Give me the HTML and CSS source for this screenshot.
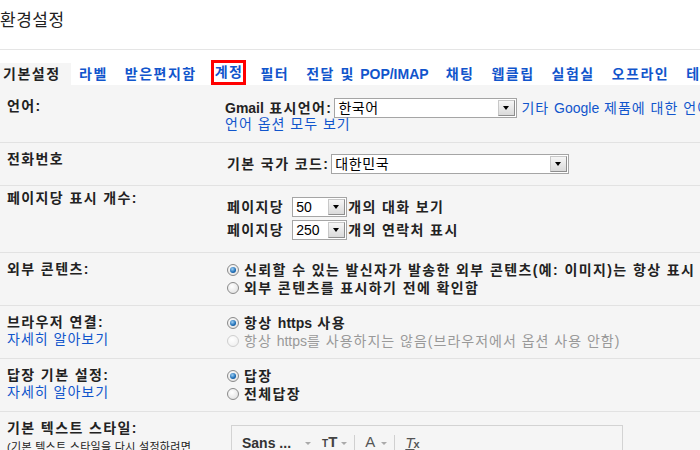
FILE: index.html
```html
<!DOCTYPE html>
<html lang="ko">
<head>
    <meta charset="UTF-8">
    <title>환경설정</title>
    <link rel="stylesheet" href="styles.css">
</head>
<body>
    <div class="header">
        <h1 class="title">환경설정</h1>
    </div>

    <div class="tabs">
        <a class="tab active">기본설정</a>
        <a class="tab">라벨</a>
        <a class="tab">받은편지함</a>
        <a class="tab"><span class="mark">계정</span></a>
        <a class="tab">필터</a>
        <a class="tab">전달 및 <span class="en">POP/IMAP</span></a>
        <a class="tab">채팅</a>
        <a class="tab">웹클립</a>
        <a class="tab">실험실</a>
        <a class="tab">오프라인</a>
        <a class="tab">테마</a>
    </div>

    <div class="settings">
        <div class="row row-lang">
            <div class="label">언어:</div>
            <div class="value">
                <div class="sel-line">
                    <span><span class="en">Gmail</span> 표시언어:</span>
                    <div class="select sel-lang"><span class="sel-text">한국어</span><i class="sel-btn"></i></div>
                    <a class="link link-side">기타 <span class="en">Google</span> 제품에 대한 언어 설정 변경</a>
                </div>
                <div class="sub-line"><a class="link">언어 옵션 모두 보기</a></div>
            </div>
        </div>

        <div class="row row-phone">
            <div class="label">전화번호</div>
            <div class="value">
                <div class="sel-line">
                    <span>기본 국가 코드:</span>
                    <div class="select sel-country"><span class="sel-text">대한민국</span><i class="sel-btn"></i></div>
                </div>
            </div>
        </div>

        <div class="row row-page">
            <div class="label">페이지당 표시 개수:</div>
            <div class="value">
                <div class="sel-line">
                    <span>페이지당</span>
                    <div class="select sel-num"><span class="sel-text en">50</span><i class="sel-btn"></i></div>
                    <span>개의 대화 보기</span>
                </div>
                <div class="sel-line">
                    <span>페이지당</span>
                    <div class="select sel-num"><span class="sel-text en">250</span><i class="sel-btn"></i></div>
                    <span>개의 연락처 표시</span>
                </div>
            </div>
        </div>

        <div class="row row-radio">
            <div class="label">외부 콘텐츠:</div>
            <div class="value">
                <div class="radio-line"><i class="radio on"></i><span>신뢰할 수 있는 발신자가 발송한 외부 콘텐츠(예: 이미지)는 항상 표시</span></div>
                <div class="radio-line"><i class="radio"></i><span>외부 콘텐츠를 표시하기 전에 확인함</span></div>
            </div>
        </div>

        <div class="row row-radio">
            <div class="label">
                브라우저 연결:
                <div><a class="link">자세히 알아보기</a></div>
            </div>
            <div class="value">
                <div class="radio-line"><i class="radio on"></i><span>항상 <span class="en">https</span> 사용</span></div>
                <div class="radio-line disabled"><i class="radio"></i><span>항상 <span class="en">https</span>를 사용하지는 않음(브라우저에서 옵션 사용 안함)</span></div>
            </div>
        </div>

        <div class="row row-radio">
            <div class="label">
                답장 기본 설정:
                <div><a class="link">자세히 알아보기</a></div>
            </div>
            <div class="value">
                <div class="radio-line"><i class="radio on"></i><span>답장</span></div>
                <div class="radio-line"><i class="radio"></i><span>전체답장</span></div>
            </div>
        </div>

        <div class="row row-style">
            <div class="label">
                기본 텍스트 스타일:
                <div class="hint">(기본 텍스트 스타일을 다시 설정하려면</div>
            </div>
            <div class="value">
                <div class="editor">
                    <div class="toolbar">
                        <span class="font-name">Sans ...</span>
                        <i class="caret caret-font"></i>
                        <span class="size-icon"><span class="t-sm">T</span><span class="t-lg">T</span></span>
                        <i class="caret"></i>
                        <i class="divider"></i>
                        <span class="color-icon">A</span>
                        <i class="caret"></i>
                        <i class="divider"></i>
                        <span class="clear-icon"><span class="clear-t">T</span><span class="clear-x">x</span></span>
                    </div>
                </div>
            </div>
        </div>
    </div>
</body>
</html>
```

FILE: styles.css
```css
html, body {
    margin: 0;
    overflow: hidden;
}
body {
    width: 700px;
    height: 450px;
    font-family: "Liberation Sans", Arial, "Noto Sans CJK KR", sans-serif;
    font-size: 14px;
    color: #222;
    background-color: #fff;
}
.en {
    letter-spacing: 0;
}

/* header + tabs */
.header {
    height: 49px;
    border-bottom: 1px solid #e5e5e5;
}
.title {
    margin: 0;
    padding-top: 8px;
    font-size: 17px;
    font-weight: normal;
    line-height: 26px;
    letter-spacing: 0.5px;
    color: #222;
}
.tabs {
    display: flex;
    padding-top: 13px;
    white-space: nowrap;
}
.tab {
    flex-shrink: 0;
    padding: 0 8.5px;
    line-height: 22px;
    height: 22px;
    font-weight: bold;
    letter-spacing: 1.5px;
    color: #15c;
}
.tab.active {
    padding: 0 10px 0 3px;
    background-color: #f5f5f5;
    color: #222;
}
.mark {
    display: inline-block;
    vertical-align: top;
    line-height: 19px;
    padding: 0 0 0 1px;
    outline: 3px solid #f00;
}

/* settings rows */
.settings {
    background-color: #f5f5f5;
    height: 400px;
}
.row {
    display: flex;
    padding: 8px 0 11px;
    border-bottom: 1px solid #e2e2e2;
    white-space: nowrap;
}
.label {
    flex-shrink: 0;
    width: 227px;
    box-sizing: border-box;
    padding-left: 7px;
    line-height: 17px;
    font-weight: bold;
    letter-spacing: 1.4px;
    color: #222;
}
.value {
    flex: 1;
    line-height: 18px;
    font-weight: bold;
    letter-spacing: 1.4px;
    color: #222;
}
.link {
    color: #15c;
    font-weight: normal;
    letter-spacing: 1px;
    text-decoration: none;
}

.row-lang .label { padding-top: 5px; }
.row-lang .value { padding-top: 5px; margin-left: -2px; }
.row-phone .value { padding-top: 3px; }
.row-page { padding-bottom: 12px; }
.row-page .label { margin-top: -4px; }
.row-page .value { padding-top: 3px; }
.row-radio { padding-bottom: 8px; }
.row-style .value { padding-top: 5px; }

.sel-line {
    display: flex;
    align-items: center;
    height: 20px;
}
.sel-line + .sel-line {
    margin-top: 3px;
}
.sub-line {
    line-height: 13px;
}
.link-side {
    margin-left: 4px;
}

/* select boxes */
.select {
    display: flex;
    align-items: center;
    height: 20px;
    box-sizing: border-box;
    margin-left: 2px;
    padding-left: 3px;
    border: 1px solid #a5a5a5;
    background-color: #fff;
    font-weight: normal;
    color: #000;
    letter-spacing: 0.6px;
}
.sel-text {
    flex: 1;
    line-height: 18px;
}
.sel-lang { width: 183px; }
.sel-country { width: 238px; }
.sel-num {
    width: 55px;
    margin-left: 8px;
    margin-right: 1px;
}
.sel-btn {
    position: relative;
    width: 17px;
    height: 16px;
    margin-right: 1px;
    box-sizing: border-box;
    border: 1px solid #8e8e8e;
    border-top-color: #c8c8c8;
    border-left-color: #c8c8c8;
    background: linear-gradient(#f6f6f6, #dadada);
}
.sel-btn::after {
    content: "";
    position: absolute;
    left: 4px;
    top: 5px;
    border-left: 3.5px solid transparent;
    border-right: 3.5px solid transparent;
    border-top: 4px solid #000;
}

/* radios */
.radio-line {
    display: flex;
    align-items: center;
    height: 18px;
}
.radio {
    position: relative;
    flex-shrink: 0;
    width: 12px;
    height: 12px;
    box-sizing: border-box;
    margin-right: 5px;
    border: 1px solid #8a8a8a;
    border-radius: 50%;
    background: radial-gradient(circle at 40% 35%, #fff, #dcdcdc);
}
.radio.on::after {
    content: "";
    position: absolute;
    left: 2px;
    top: 2px;
    width: 6px;
    height: 6px;
    border-radius: 50%;
    background: radial-gradient(circle at 40% 35%, #9fd0f5, #1b6bb3 60%, #0c3f78);
}
.radio-line.disabled {
    font-weight: normal;
    letter-spacing: 1px;
    color: #999;
}
.disabled .radio {
    border-color: #cfcfcf;
    background: radial-gradient(circle at 40% 35%, #fff, #ececec);
}

.hint {
    margin-top: 3px;
    font-size: 11px;
    font-weight: normal;
    line-height: 15px;
    letter-spacing: 0.3px;
    color: #222;
}

/* editor toolbar */
.editor {
    width: 392px;
    height: 40px;
    box-sizing: border-box;
    margin-left: 4px;
    border: 1px solid #d3d3d3;
}
.toolbar {
    display: flex;
    align-items: center;
    height: 20px;
    padding: 7px 0 0 10px;
    letter-spacing: 0;
}
.font-name {
    font-weight: bold;
    color: #333;
}
.caret {
    width: 0;
    height: 0;
    margin-left: 4px;
    border-left: 3px solid transparent;
    border-right: 3px solid transparent;
    border-top: 3px solid #aaa;
}
.caret-font {
    margin-left: 14px;
}
.size-icon {
    display: flex;
    align-items: baseline;
    margin-left: 11px;
    font-weight: bold;
    color: #444;
}
.t-sm { font-size: 10px; }
.t-lg { font-size: 15px; }
.divider {
    width: 1px;
    height: 18px;
    margin: 2px 8px 0 7px;
    background-color: #d0d0d0;
}
.color-icon {
    width: 14px;
    font-size: 15px;
    font-weight: normal;
    line-height: 16px;
    text-align: center;
    color: #555;
    border-bottom: 3px solid #999;
}
.clear-icon {
    display: flex;
    align-items: baseline;
    margin-left: 2px;
    color: #555;
    font-weight: normal;
}
.clear-t {
    font-size: 15px;
    font-style: italic;
    text-decoration: underline;
}
.clear-x {
    font-size: 11px;
    font-weight: bold;
    margin-left: -1px;
}
```
